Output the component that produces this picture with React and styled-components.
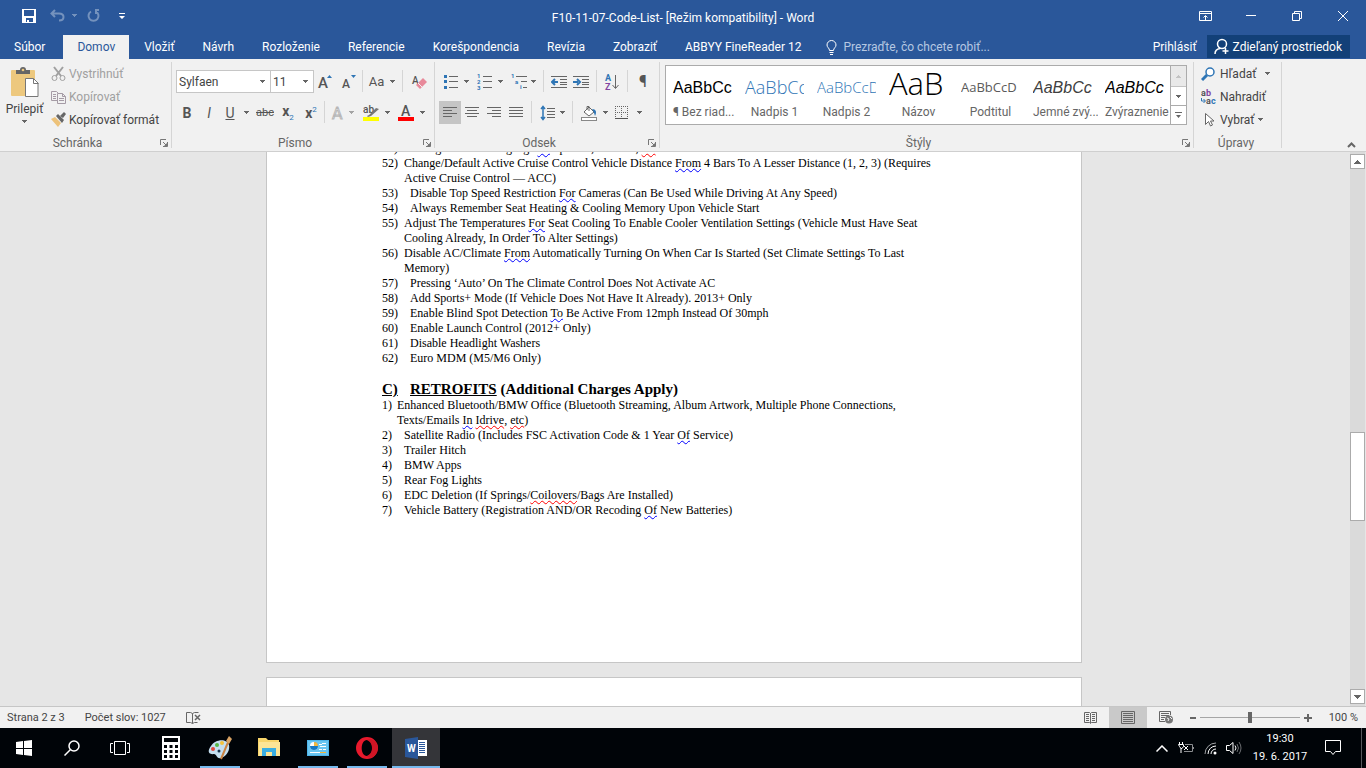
import React from "react";
import styled, { createGlobalStyle, css } from "styled-components";

const GlobalStyle = createGlobalStyle`
  * {
    box-sizing: border-box;
  }
  body {
    margin: 0;
    background: #e6e6e6;
    font-family: Roboto, "Open Sans", sans-serif;
    font-size: 12px;
    line-height: 16px;
    color: #444444;
  }
  button, select, input {
    font: inherit;
    color: inherit;
    border: none;
    padding: 0;
    margin: 0;
    background: transparent;
  }
  svg {
    display: block;
    flex: none;
  }
`;

const Window = styled.div`
  display: flex;
  flex-direction: column;
  height: 100vh;
  overflow: hidden;
`;

/* title bar */

const TitleBar = styled.header`
  display: grid;
  grid-template-columns: 1fr auto 1fr;
  align-items: center;
  height: 35px;
  background: #2a579a;
  color: white;
`;

const QuickAccess = styled.div`
  display: flex;
  align-items: center;
  padding: 0 0 4px 15px;
`;

const WindowButtons = styled.div`
  display: flex;
  justify-content: flex-end;
  padding-bottom: 4px;
`;

const BarButton = styled.button`
  display: flex;
  align-items: center;
  justify-content: center;
  width: ${(p) => p.$width || 46}px;
  height: 28px;
  opacity: ${(p) => (p.disabled ? 0.35 : 1)};
`;

const Title = styled.h1`
  margin: 0;
  font-size: 12px;
  font-weight: normal;
`;

/* tabs */

const TabRow = styled.nav`
  display: flex;
  height: 24px;
  background: #2a579a;
  color: white;
`;

const Tab = styled.button`
  padding: 0 14px;
  margin-right: ${(p) => (p.$file ? 4 : p.$active ? 1 : 0)}px;
  white-space: nowrap;
  ${(p) =>
    p.$active &&
    css`
      background: #f1f1f1;
      color: #2a579a;
    `}
`;

const TellMe = styled.label`
  display: flex;
  align-items: center;
  gap: 6px;
  flex: 1;
  padding-left: 11px;
  input {
    width: 200px;
    &::placeholder {
      color: #b6c8e2;
      opacity: 1;
    }
  }
`;

const ShareButton = styled.button`
  display: flex;
  align-items: center;
  gap: 4px;
  height: 23px;
  padding: 0 8px 0 7px;
  margin: 0 16px 0 10px;
  background: #124078;
  white-space: nowrap;
`;

/* ribbon */

const Ribbon = styled.section`
  display: flex;
  height: 93px;
  padding: 3px 0;
  background: #f1f1f1;
  border-bottom: 1px solid #cfcfcf;
`;

const Group = styled.div`
  display: flex;
  flex-direction: column;
  justify-content: space-between;
  flex: 0 0 ${(p) => p.$width}px;
  border-right: 1px solid #d5d5d5;
`;

const GroupFooter = styled.div`
  display: flex;
  align-items: center;
  gap: 5px;
  height: 10px;
  padding-right: 3px;
  color: #666666;
  span {
    flex: 1;
    text-align: center;
  }
`;

const CollapseCorner = styled.div`
  flex: 1;
  display: flex;
  align-items: flex-end;
  justify-content: flex-end;
  padding-right: 10px;
`;

const ClipboardBody = styled.div`
  display: flex;
`;

const PasteButton = styled.button`
  display: flex;
  flex-direction: column;
  align-items: center;
  width: 49px;
  padding-top: 5px;
  gap: 3px;
`;

const CommandList = styled.div`
  display: flex;
  flex-direction: column;
  padding-left: ${(p) => p.$indent || 0}px;
`;

const Command = styled.button`
  display: flex;
  align-items: center;
  gap: 3px;
  height: 23px;
  white-space: nowrap;
  color: ${(p) => (p.disabled ? "#a0a0a0" : "#444444")};
`;

const ToolRows = styled.div`
  display: flex;
  flex-direction: column;
  gap: 8px;
  padding: 8px 0 0 4px;
`;

const ToolRow = styled.div`
  display: flex;
  height: 23px;
`;

const Tool = styled.button`
  display: flex;
  align-items: center;
  justify-content: center;
  gap: ${(p) => p.$gap || 0}px;
  width: ${(p) => p.$width || 22}px;
  font-size: ${(p) => p.$size || 14}px;
  opacity: ${(p) => (p.disabled ? 0.55 : 1)};
  background: ${(p) => (p.$active ? "#c5c5c5" : "transparent")};
  color: #555555;
  sub, sup {
    font-size: 8px;
    line-height: 8px;
    color: #2e75b5;
  }
`;

const Divider = styled.span`
  width: 1px;
  height: 22px;
  margin: 0 ${(p) => p.$gap || 4}px;
  background: #d5d5d5;
`;

const Combo = styled.span`
  position: relative;
  width: ${(p) => p.$width}px;
  height: 23px;
  margin-right: -1px;
  background: white;
  border: 1px solid #c6c6c6;
  select {
    appearance: none;
    width: 100%;
    height: 21px;
    padding-left: 2px;
  }
  svg {
    position: absolute;
    right: 5px;
    top: 9px;
    pointer-events: none;
  }
`;

const Gallery = styled.div`
  display: flex;
  height: 60px;
  margin: 3px 6px 0 5px;
  background: white;
  border: 1px solid #ababab;
`;

const StyleItem = styled.button`
  display: flex;
  flex-direction: column;
  flex: 0 0 72px;
  padding: 7px 6px 0 7px;
  color: #666666;
  overflow: hidden;
`;

const Sample = styled.span`
  width: 100%;
  height: 31px;
  overflow: hidden;
  white-space: nowrap;
  text-align: left;
  line-height: ${(p) => p.$line || 29}px;
  font-family: ${(p) => p.$font || '"Open Sans"'}, sans-serif;
  font-size: ${(p) => p.$size || 16}px;
  font-weight: ${(p) => p.$weight || 400};
  font-style: ${(p) => (p.$italic ? "italic" : "normal")};
  color: ${(p) => p.$color || "black"};
`;

const StyleName = styled.span`
  width: 100%;
  text-align: center;
  white-space: nowrap;
`;

const GalleryScroll = styled.div`
  display: grid;
  flex: 1;
  grid-template-rows: 21px 19px 1fr;
  border-left: 1px solid #ababab;
  button {
    display: flex;
    flex-direction: column;
    align-items: center;
    justify-content: center;
    border-bottom: 1px solid #ababab;
  }
  button:first-child {
    background: #e1e1e1;
    opacity: 0.7;
  }
  button:last-child {
    border-bottom: none;
  }
`;

/* document */

const Workspace = styled.main`
  display: flex;
  flex: 1;
  min-height: 0;
`;

const Canvas = styled.div`
  display: flex;
  flex-direction: column;
  align-items: center;
  flex: 1;
  padding-right: 2px;
  overflow: hidden;
`;

const Page = styled.article`
  flex: ${(p) => (p.$next ? "1 0 0" : "none")};
  width: 816px;
  margin-top: ${(p) => (p.$next ? 14 : 0)}px;
  padding: 0 110px ${(p) => (p.$next ? 0 : 144)}px 115px;
  background: white;
  border: 1px solid #c6c6c6;
  border-top-width: ${(p) => (p.$next ? 1 : 0)}px;
  border-bottom-width: ${(p) => (p.$next ? 0 : 1)}px;
  font-family: "Liberation Serif", serif;
  font-size: 12px;
  line-height: 15px;
  color: black;
`;

const List = styled.ol`
  list-style: none;
  margin: ${(p) => (p.$continued ? -11 : 0)}px 0 0;
  padding: 0;
`;

const Item = styled.li`
  display: flex;
  white-space: nowrap;
`;

const Marker = styled.span`
  flex: 0 0 ${(p) => p.$width}px;
`;

const Heading = styled.h2`
  display: flex;
  margin: 15px 0 0;
  font-size: 15px;
  line-height: 17px;
`;

const Flag = styled.span`
  text-decoration: underline wavy ${(p) => (p.$spelling ? "#ff0000" : "#0000ff")} 1px;
  text-underline-offset: 1px;
  text-decoration-skip-ink: none;
`;

const Scrollbar = styled.div`
  display: flex;
  flex-direction: column;
  justify-content: space-between;
  width: 15px;
  margin-right: 1px;
  padding: 2px 0;
  background: #dadada;
`;

const ScrollButton = styled.button`
  display: flex;
  align-items: center;
  justify-content: center;
  height: 15px;
  background: white;
  border: 1px solid #ababab;
`;

const Track = styled.div`
  flex: 1;
  padding-top: 263px;
`;

const Thumb = styled.div`
  height: 89px;
  background: white;
  border: 1px solid #ababab;
`;

/* status bar */

const StatusBar = styled.footer`
  display: flex;
  align-items: center;
  height: 22px;
  padding: 0 8px 0 7px;
  font-size: 11px;
  background: #f1f1f1;
  border-top: 1px solid #c6c6c6;
`;

const StatusText = styled.span`
  margin-right: 20px;
`;

const ViewButton = styled.button`
  display: flex;
  align-items: center;
  justify-content: center;
  width: 38px;
  height: 21px;
  background: ${(p) => (p.$active ? "#c9c9c9" : "transparent")};
`;

const ZoomSlider = styled.input`
  appearance: none;
  width: 100px;
  height: 12px;
  margin: 0 3px;
  background: linear-gradient(#a6a6a6, #a6a6a6) center / 100% 1px no-repeat;
  &::-webkit-slider-thumb {
    appearance: none;
    width: 4px;
    height: 11px;
    background: #666666;
  }
`;

const ZoomValue = styled.span`
  width: 46px;
  text-align: right;
`;

/* taskbar */

const Taskbar = styled.footer`
  display: flex;
  height: 40px;
  background: #000408;
  color: white;
`;

const Apps = styled.div`
  display: flex;
  gap: 1px;
  margin-left: 3px;
`;

const TaskButton = styled.button`
  position: relative;
  display: flex;
  align-items: center;
  justify-content: center;
  width: 48px;
  height: 40px;
  background: ${(p) => (p.$active ? "#343539" : "transparent")};
  &::after {
    content: "";
    display: ${(p) => (p.$running ? "block" : "none")};
    position: absolute;
    left: ${(p) => (p.$active ? 0 : 4)}px;
    right: ${(p) => (p.$active ? 0 : 4)}px;
    bottom: 0;
    height: 2px;
    background: #76b9ed;
  }
`;

const Tray = styled.div`
  display: flex;
  align-items: center;
  flex: 1;
  justify-content: flex-end;
`;

const TrayButton = styled.button`
  display: flex;
  align-items: center;
  justify-content: center;
  width: 24px;
  height: 40px;
`;

const Clock = styled.time`
  width: 64px;
  margin: 0 9px 0 2px;
  text-align: center;
  font-size: 11px;
  line-height: 18px;
`;

const ShowDesktop = styled.button`
  width: 5px;
  height: 40px;
  margin-left: 16px;
  border-left: 1px solid #55585c;
`;

/* small drawings */

const Caret = ({ up, large, color = "#666666" }) => {
  const size = large ? 7 : 5;
  const rows = (size + 1) / 2;
  const d = Array.from({ length: rows }, (_, i) => {
    const y = up ? rows - 1 - i : i;
    return `M${i} ${y}h${size - 2 * i}v1H${i}z`;
  }).join("");
  return (
    <svg width={size} height={rows} viewBox={`0 0 ${size} ${rows}`} shapeRendering="crispEdges">
      <path d={d} fill={color} />
    </svg>
  );
};

const Svg = ({ w = 16, h = 16, children, ...rest }) => (
  <svg width={w} height={h} viewBox={`0 0 ${w} ${h}`} fill="none" stroke="#666666" {...rest}>
    {children}
  </svg>
);

const Launcher = () => (
  <Svg w={8} h={8} stroke="#777777">
    <path d="M.5 6V.5H6M3 3l3 3M7.500 3v4.500H3" />
    <path d="M7 4v3H4z" fill="#777777" stroke="none" />
  </Svg>
);

const PasteIcon = () => (
  <Svg w={28} h={31} stroke="none">
    <rect y="3" width="24" height="26" rx="1" fill="#edc87e" />
    <path d="M5 7V3h4a3 3 0 0 1 6 0h4v4z" fill="#666666" />
    <circle cx="12" cy="3" r="1.3" fill="#edc87e" />
    <path d="M14.500 11.500h8l4.500 4.500v13.500h-12.500z" fill="white" stroke="#777777" />
    <path d="M22.500 11.500v5h5" stroke="#777777" />
  </Svg>
);

const CutIcon = () => (
  <Svg w={15} stroke="#a0a0a0">
    <path d="M3 1l7 9M12 1L5 10" strokeWidth="2" />
    <circle cx="3.500" cy="12" r="2.500" />
    <circle cx="11.500" cy="12" r="2.500" />
  </Svg>
);

const CopyIcon = () => (
  <Svg w={15} stroke="#a59ba5">
    <path d="M.5 2.500h5l2 2v7h-7zM2 5.500h3M2 7.500h3M2 9.500h3" />
    <path d="M6.500 4.500h5l3 3v7h-8z" fill="#f1f1f1" />
    <path d="M11.500 4.500v3h3M8 9.500h5M8 11.500h5" />
  </Svg>
);

const BrushIcon = () => (
  <Svg w={15} stroke="none">
    <path d="M0 7l4-2 6 6-3 4z" fill="#edc27a" />
    <path d="M5 4l2-2 6 6-2 3z" fill="#666666" />
    <path d="M9 4l4-4 2 2-3 4z" fill="#666666" />
  </Svg>
);

const FontSizeIcon = ({ up }) => (
  <Svg w={18} h={20} stroke="none">
    <text x="1" y="16" fontSize={up ? 15 : 12} fontWeight="500" fill="#555555">A</text>
    <path d={up ? "M10 6h5l-2.500-3z" : "M10 3h5l-2.500 3z"} fill="#2e75b5" />
  </Svg>
);

const ClearIcon = () => (
  <Svg stroke="none">
    <text x="1" y="10" fontSize="10" fontWeight="500" fill="#555555">A</text>
    <path d="M5 11l7-7 4 4-7 7z" fill="#e8899a" />
    <path d="M7 9l4 4" stroke="#f1f1f1" />
  </Svg>
);

const EffectIcon = () => (
  <Svg w={14} h={20}>
    <text x="1" y="16" fontSize="16" fill="white" stroke="#888888">A</text>
  </Svg>
);

const HighlightIcon = () => (
  <Svg h={18} stroke="none">
    <text x="0" y="9" fontSize="10" fontWeight="500" fill="#555555">ab</text>
    <path d="M4 12l2-1 7-7 3 1-8 7-3 1z" fill="#777777" />
    <rect y="13" width="16" height="4" fill="#ffff00" />
  </Svg>
);

const FontColorIcon = () => (
  <Svg h={18} stroke="none">
    <text x="3" y="12" fontSize="14" fontWeight="500" fill="#555555">A</text>
    <rect y="13" width="16" height="4" fill="#ff0000" />
  </Svg>
);

const ListIcon = ({ kind }) => (
  <Svg h={18}>
    {kind === "bullets" && <path d="M1 2h3v3H1zM1 7h3v3H1zM1 13h3v3H1z" fill="#2e75b5" stroke="none" />}
    {kind === "numbers" && (
      <g fill="#2e75b5" stroke="none" fontSize="6" fontWeight="bold">
        <text x="0" y="5">1</text>
        <text x="0" y="11">2</text>
        <text x="0" y="17">3</text>
      </g>
    )}
    {kind === "levels" ? (
      <g>
        <g fill="#2e75b5" stroke="none" fontSize="6" fontWeight="bold">
          <text x="0" y="5">1</text>
          <text x="4" y="11">a</text>
          <text x="9" y="16">i</text>
        </g>
        <path d="M5 3.500h11M10 8.500h6M12 14.500h4" />
      </g>
    ) : (
      <path d="M6 3.500h9M6 8.500h9M6 14.500h9" />
    )}
  </Svg>
);

const IndentIcon = ({ right }) => (
  <Svg>
    <path d="M0 2.500h16M9 5.500h7M9 8.500h7M9 10.500h7M0 13.500h16" />
    <path d={right ? "M0 8h5M4 5l3 3-3 3" : "M7 8H2M4 5L1 8l3 3"} stroke="#2e75b5" strokeWidth="2" />
  </Svg>
);

const SortIcon = () => (
  <Svg h={20}>
    <g stroke="none" fontSize="9" fontWeight="bold">
      <text x="1" y="9" fill="#2e75b5">A</text>
      <text x="1" y="18" fill="#8044a0">Z</text>
    </g>
    <path d="M11.500 3v13M8.500 13l3 3.500 3-3.500" />
  </Svg>
);

const AlignIcon = ({ lines }) => (
  <Svg w={14} h={13}>
    <path d={lines.map(([x, w], i) => `M${x} ${i * 3 + 1.5}h${w}`).join("")} />
  </Svg>
);

const SpacingIcon = () => (
  <Svg>
    <path d="M7 3.500h8M7 6.500h8M7 9.500h8M7 12.500h8" />
    <path d="M3 2v12M1 4l2-2.500L5 4M1 12l2 2.500L5 12" stroke="#2e75b5" strokeWidth="1.500" />
  </Svg>
);

const ShadingIcon = () => (
  <Svg>
    <path d="M3 7l5-5 5 5-5 4z" fill="white" />
    <path d="M6 5V1.500h2V6" />
    <path d="M11 4c4 0 5 3 3 7-1-3-1-4-3-7z" fill="#2e75b5" stroke="none" />
    <rect x=".5" y="12.500" width="15" height="3" fill="white" stroke="#888888" />
  </Svg>
);

const BordersIcon = () => (
  <Svg w={14} h={14}>
    <path d="M.5 0v12M6.500 0v12M12.500 0v12M0 .5h13M0 6.500h13" strokeDasharray="1 1" />
    <path d="M0 12.500h13" stroke="#555555" />
  </Svg>
);

const FindIcon = () => (
  <Svg>
    <circle cx="9" cy="6" r="4" stroke="#2e75b5" strokeWidth="1.500" fill="white" />
    <path d="M6 9l-5 5" stroke="#2e75b5" strokeWidth="3" />
  </Svg>
);

const ReplaceIcon = () => (
  <Svg h={18} stroke="none">
    <g fontSize="9" fontWeight="bold">
      <text x="0" y="8" fill="#555555">a</text>
      <text x="5" y="8" fill="#8044a0">b</text>
      <text x="5" y="16" fill="#555555">a</text>
      <text x="10" y="16" fill="#2e75b5">c</text>
    </g>
    <path d="M.5 10v3H4M2.500 11l2 2-2 2" fill="none" stroke="#2e75b5" />
  </Svg>
);

const SelectIcon = () => (
  <Svg>
    <path d="M4.500 1.500v11l3-3 2 4.500 2-1-2-4h3.500z" fill="white" />
  </Svg>
);

const Bulb = () => (
  <Svg w={11} h={15} stroke="white">
    <path d="M3.500 10.500C3.500 8 1 7.500 1 5a4.500 4.500 0 0 1 9 0c0 2.500-2.500 3-2.500 5.500zM3.500 12.500h4M4 14.500h3" />
  </Svg>
);

const ShareIcon = () => (
  <Svg w={15} h={17} stroke="white">
    <circle cx="8" cy="6" r="4.500" strokeWidth="1.500" />
    <path d="M1 16c0-3 2-5 5-5.500M11.500 10v6M8.500 13h6" strokeWidth="1.500" />
  </Svg>
);

const styleItems = [
  { name: "¶ Bez riad...", text: "AaBbCc", font: '"Liberation Sans"' },
  { name: "Nadpis 1", text: "AaBbCc", size: 18, weight: 300, color: "#2e74b5" },
  { name: "Nadpis 2", text: "AaBbCcD", weight: 300, size: 15, color: "#2e74b5" },
  { name: "Názov", text: "AaB", size: 31, weight: 300, line: 21 },
  { name: "Podtitul", text: "AaBbCcD", size: 13, color: "#5a5a5a" },
  { name: "Jemné zvý...", text: "AaBbCc", font: '"Liberation Sans"', italic: true, color: "#404040" },
  { name: "Zvýraznenie", text: "AaBbCc", font: '"Liberation Sans"', italic: true },
];

const tabs = ["Vložiť", "Návrh", "Rozloženie", "Referencie", "Korešpondencia", "Revízia", "Zobraziť", "ABBYY FineReader 12"];

const codingItems = [
  { no: 51, text: <>Change Cluster Language <Flag>To</Flag> Spanish, Chinese, <Flag $spelling>etc</Flag></> },
  {
    no: 52,
    wraps: true,
    text: <>Change/Default Active Cruise Control Vehicle Distance <Flag>From</Flag> 4 Bars To A Lesser Distance (1, 2, 3) (Requires<br />Active Cruise Control — ACC)</>,
  },
  { no: 53, text: <>Disable Top Speed Restriction <Flag>For</Flag> Cameras (Can Be Used While Driving At Any Speed)</> },
  { no: 54, text: "Always Remember Seat Heating & Cooling Memory Upon Vehicle Start" },
  {
    no: 55,
    wraps: true,
    text: <>Adjust The Temperatures <Flag>For</Flag> Seat Cooling To Enable Cooler Ventilation Settings (Vehicle Must Have Seat<br />Cooling Already, In Order To Alter Settings)</>,
  },
  {
    no: 56,
    wraps: true,
    text: <>Disable AC/Climate <Flag>From</Flag> Automatically Turning On When Car Is Started (Set Climate Settings To Last<br />Memory)</>,
  },
  { no: 57, text: "Pressing ‘Auto’ On The Climate Control Does Not Activate AC" },
  { no: 58, text: "Add Sports+ Mode (If Vehicle Does Not Have It Already). 2013+ Only" },
  { no: 59, text: <>Enable Blind Spot Detection <Flag>To</Flag> Be Active From 12mph Instead Of 30mph</> },
  { no: 60, text: "Enable Launch Control (2012+ Only)" },
  { no: 61, text: "Disable Headlight Washers" },
  { no: 62, text: "Euro MDM (M5/M6 Only)" },
];

const retrofitItems = [
  {
    no: 1,
    wraps: true,
    text: <>Enhanced Bluetooth/BMW Office (Bluetooth Streaming, Album Artwork, Multiple Phone Connections,<br />Texts/Emails <Flag>In</Flag> <Flag $spelling>Idrive</Flag>, <Flag $spelling>etc</Flag>)</>,
  },
  { no: 2, text: <>Satellite Radio (Includes FSC Activation Code & 1 Year <Flag>Of</Flag> Service)</> },
  { no: 3, text: "Trailer Hitch" },
  { no: 4, text: "BMW Apps" },
  { no: 5, text: "Rear Fog Lights" },
  { no: 6, text: <>EDC Deletion (If Springs/<Flag $spelling>Coilovers</Flag>/Bags Are Installed)</> },
  { no: 7, text: <>Vehicle Battery (Registration AND/OR Recoding <Flag>Of</Flag> New Batteries)</> },
];

const RibbonGroup = ({ label, width, launcher = true, children }) => (
  <Group $width={width}>
    {children}
    <GroupFooter>
      <span>{label}</span>
      {launcher && <Launcher />}
    </GroupFooter>
  </Group>
);

const App = () => {
  return (
    <Window>
      <GlobalStyle />
      <TitleBar>
        <QuickAccess>
          <BarButton $width={28} aria-label="Uložiť">
            <Svg w={14} h={14} stroke="none">
              <path d="M0 0h14v14H0z" fill="white" />
              <path d="M2 1h10v6H2zM4 9h7v4H7v-2H5v2H4z" fill="#2a579a" />
            </Svg>
          </BarButton>
          <BarButton $width={28} disabled aria-label="Späť">
            <Svg w={15} h={13} stroke="white" strokeWidth="2">
              <path d="M5 1L1.500 4.500 5 8M2 4.500h7c6 0 6 7 0 7" />
            </Svg>
          </BarButton>
          <BarButton $width={6} disabled aria-label="Zoznam krokov späť">
            <Caret color="white" />
          </BarButton>
          <BarButton $width={32} disabled aria-label="Opakovať">
            <Svg w={13} h={13} stroke="white" strokeWidth="2">
              <path d="M4 2.500a5 5 0 1 0 5 0M8 1h4M9 1v4" />
            </Svg>
          </BarButton>
          <BarButton $width={26} aria-label="Prispôsobiť">
            <Svg w={6} h={6} stroke="none">
              <path d="M0 0h6v1H0zM0 3h6L3 6z" fill="white" />
            </Svg>
          </BarButton>
        </QuickAccess>
        <Title>F10-11-07-Code-List- [Režim kompatibility] - Word</Title>
        <WindowButtons>
          <BarButton aria-label="Možnosti pása s nástrojmi">
            <Svg w={13} h={10} stroke="white">
              <path d="M.5.5h12v9H.5zM0 2.500h13M6.500 9V5M4.500 6.500l2-2 2 2" />
            </Svg>
          </BarButton>
          <BarButton aria-label="Minimalizovať">
            <Svg w={10} h={2} stroke="white"><path d="M0 .5h10" /></Svg>
          </BarButton>
          <BarButton aria-label="Obnoviť">
            <Svg w={10} h={10} stroke="white"><path d="M.5 2.500h7v7h-7zM2.500 2V.5h7v7H8" /></Svg>
          </BarButton>
          <BarButton aria-label="Zavrieť">
            <Svg w={10} h={10} stroke="white"><path d="M0 0l10 10M10 0L0 10" /></Svg>
          </BarButton>
        </WindowButtons>
      </TitleBar>

      <TabRow>
        <Tab $file>Súbor</Tab>
        <Tab $active>Domov</Tab>
        {tabs.map((tab) => (
          <Tab key={tab}>{tab}</Tab>
        ))}
        <TellMe>
          <Bulb />
          <input type="text" placeholder="Prezraďte, čo chcete robiť..." aria-label="Prezraďte, čo chcete robiť" />
        </TellMe>
        <button>Prihlásiť</button>
        <ShareButton>
          <ShareIcon />
          Zdieľaný prostriedok
        </ShareButton>
      </TabRow>

      <Ribbon>
        <RibbonGroup label="Schránka" width={172}>
          <ClipboardBody>
            <PasteButton>
              <PasteIcon />
              Prilepiť
              <Caret />
            </PasteButton>
            <CommandList $indent={2}>
              <Command disabled><CutIcon />Vystrihnúť</Command>
              <Command disabled><CopyIcon />Kopírovať</Command>
              <Command><BrushIcon />Kopírovať formát</Command>
            </CommandList>
          </ClipboardBody>
        </RibbonGroup>

        <RibbonGroup label="Písmo" width={263}>
          <ToolRows>
            <ToolRow>
              <Combo $width={95}>
                <select aria-label="Písmo" defaultValue="Sylfaen"><option>Sylfaen</option></select>
                <Caret />
              </Combo>
              <Combo $width={44}>
                <select aria-label="Veľkosť písma" defaultValue="11"><option>11</option></select>
                <Caret />
              </Combo>
              <Tool $width={26} aria-label="Zväčšiť písmo"><FontSizeIcon up /></Tool>
              <Tool aria-label="Zmenšiť písmo"><FontSizeIcon /></Tool>
              <Divider $gap={1} />
              <Tool $width={36} $gap={6} $size={13} aria-label="Zmeniť veľkosť písmen">Aa<Caret /></Tool>
              <Divider $gap={2} />
              <Tool $width={28} aria-label="Vymazať formátovanie"><ClearIcon /></Tool>
            </ToolRow>
            <ToolRow>
              <Tool aria-label="Tučné"><b>B</b></Tool>
              <Tool aria-label="Kurzíva"><i>I</i></Tool>
              <Tool $width={34} $gap={9} aria-label="Podčiarknuté"><u>U</u><Caret /></Tool>
              <Tool $size={11} aria-label="Prečiarknuté"><s>abc</s></Tool>
              <Tool $width={24} aria-label="Dolný index"><span><b>x</b><sub>2</sub></span></Tool>
              <Tool aria-label="Horný index"><span><b>x</b><sup>2</sup></span></Tool>
              <Divider $gap={2} />
              <Tool disabled $width={30} $gap={4} aria-label="Textové efekty"><EffectIcon /><Caret /></Tool>
              <Tool $width={38} $gap={6} aria-label="Farba zvýraznenia"><HighlightIcon /><Caret /></Tool>
              <Tool $width={32} $gap={6} aria-label="Farba písma"><FontColorIcon /><Caret /></Tool>
            </ToolRow>
          </ToolRows>
        </RibbonGroup>

        <RibbonGroup label="Odsek" width={225}>
          <ToolRows>
            <ToolRow>
              <Tool $width={34} $gap={5} aria-label="Odrážky"><ListIcon kind="bullets" /><Caret /></Tool>
              <Tool $width={34} $gap={5} aria-label="Číslovanie"><ListIcon kind="numbers" /><Caret /></Tool>
              <Tool $width={32} $gap={4} aria-label="Viacúrovňový zoznam"><ListIcon kind="levels" /><Caret /></Tool>
              <Divider $gap={4} />
              <Tool aria-label="Zmenšiť zarážku"><IndentIcon /></Tool>
              <Tool aria-label="Zväčšiť zarážku"><IndentIcon right /></Tool>
              <Divider $gap={4} />
              <Tool aria-label="Zoradiť"><SortIcon /></Tool>
              <Divider $gap={4} />
              <Tool $size={16} aria-label="Zobraziť všetko">¶</Tool>
            </ToolRow>
            <ToolRow>
              <Tool $active aria-label="Zarovnať vľavo"><AlignIcon lines={[[0, 14], [0, 9], [0, 14], [0, 9]]} /></Tool>
              <Tool aria-label="Centrovať"><AlignIcon lines={[[0, 14], [2, 10], [0, 14], [2, 10]]} /></Tool>
              <Tool aria-label="Zarovnať vpravo"><AlignIcon lines={[[0, 14], [5, 9], [0, 14], [5, 9]]} /></Tool>
              <Tool aria-label="Zarovnať podľa okrajov"><AlignIcon lines={[[0, 14], [0, 14], [0, 14], [0, 14]]} /></Tool>
              <Divider $gap={4} />
              <Tool $width={32} $gap={4} aria-label="Riadkovanie"><SpacingIcon /><Caret /></Tool>
              <Divider $gap={4} />
              <Tool $width={34} $gap={6} aria-label="Podfarbenie"><ShadingIcon /><Caret /></Tool>
              <Tool $width={34} $gap={8} aria-label="Orámovanie"><BordersIcon /><Caret /></Tool>
            </ToolRow>
          </ToolRows>
        </RibbonGroup>

        <RibbonGroup label="Štýly" width={534}>
          <Gallery>
            {styleItems.map((item) => (
              <StyleItem key={item.name}>
                <Sample
                  $font={item.font}
                  $size={item.size}
                  $weight={item.weight}
                  $italic={item.italic}
                  $color={item.color}
                  $line={item.line}
                >
                  {item.text}
                </Sample>
                <StyleName>{item.name}</StyleName>
              </StyleItem>
            ))}
            <GalleryScroll>
              <button aria-label="Predchádzajúce štýly"><Caret up color="#ababab" /></button>
              <button aria-label="Ďalšie štýly"><Caret /></button>
              <button aria-label="Všetky štýly">
                <Svg w={7} h={6} stroke="none">
                  <path d="M0 0h7v1H0zM1 3h5L3.500 6z" fill="#666666" />
                </Svg>
              </button>
            </GalleryScroll>
          </Gallery>
        </RibbonGroup>

        <RibbonGroup label="Úpravy" width={88} launcher={false}>
          <CommandList $indent={7}>
            <Command><FindIcon />Hľadať<span /><span /><Caret /></Command>
            <Command><ReplaceIcon />Nahradiť</Command>
            <Command><SelectIcon />Vybrať<Caret /></Command>
          </CommandList>
        </RibbonGroup>

        <CollapseCorner>
          <button aria-label="Zbaliť pás s nástrojmi">
            <Svg w={9} h={6} strokeWidth="2"><path d="M1 5l3.500-3.500L8 5" /></Svg>
          </button>
        </CollapseCorner>
      </Ribbon>

      <Workspace>
        <Canvas>
          <Page>
            <List $continued>
              {codingItems.map((item) => (
                <Item key={item.no}>
                  <Marker $width={item.wraps ? 22 : 28}>{item.no})</Marker>
                  <span>{item.text}</span>
                </Item>
              ))}
            </List>
            <Heading>
              <Marker $width={28}><u>C)</u></Marker>
              <span><u>RETROFITS</u> (Additional Charges Apply)</span>
            </Heading>
            <List>
              {retrofitItems.map((item) => (
                <Item key={item.no}>
                  <Marker $width={item.wraps ? 15 : 22}>{item.no})</Marker>
                  <span>{item.text}</span>
                </Item>
              ))}
            </List>
          </Page>
          <Page $next />
        </Canvas>
        <Scrollbar>
          <ScrollButton aria-label="Nahor"><Caret up large /></ScrollButton>
          <Track><Thumb /></Track>
          <ScrollButton aria-label="Nadol"><Caret large /></ScrollButton>
        </Scrollbar>
      </Workspace>

      <StatusBar>
        <StatusText>Strana 2 z 3</StatusText>
        <StatusText>Počet slov: 1027</StatusText>
        <Svg w={15} h={13}>
          <path d="M.5 1.500h4l2 1v10l-2-1h-4zM6.500 2.500l2-1h4M6.500 12.500l2-1h3" />
          <path d="M9 4l5 5M14 4L9 9" strokeWidth="1.500" />
        </Svg>
        <CollapseCorner />
        <ViewButton aria-label="Režim čítania">
          <Svg w={13} h={12}>
            <path d="M.5.5h5l1 1 1-1h5v10h-5l-1 1-1-1h-5zM6.500 1v10M2 2.500h3M2 4.500h3M2 6.500h3M2 8.500h3M8 2.500h3M8 4.500h3M8 6.500h3M8 8.500h3" />
          </Svg>
        </ViewButton>
        <ViewButton $active aria-label="Rozloženie pri tlači">
          <Svg w={14} h={13}>
            <path d="M.5.5h13v12H.5zM2 2.500h10M2 4.500h10M2 6.500h10M2 8.500h10M2 10.500h10" />
          </Svg>
        </ViewButton>
        <ViewButton aria-label="Webové rozloženie">
          <Svg w={14} h={13}>
            <path d="M11.500 4V.5H.5v10H6M2 2.500h8M2 4.500h8M2 6.500h4M2 8.500h3" />
            <circle cx="10" cy="8.500" r="4" fill="#777777" stroke="none" />
            <path d="M8 7l2 1-1 2M11 6l2 2" stroke="#f1f1f1" />
          </Svg>
        </ViewButton>
        <button aria-label="Oddialiť"><Svg w={12} h={8}><path d="M5 4h6" strokeWidth="2" /></Svg></button>
        <ZoomSlider type="range" aria-label="Lupa" min="0" max="100" defaultValue="50" />
        <button aria-label="Priblížiť"><Svg w={9} h={8}><path d="M1 4h8M5 0v8" strokeWidth="2" /></Svg></button>
        <ZoomValue>100 %</ZoomValue>
      </StatusBar>

      <Taskbar>
        <TaskButton aria-label="Štart">
          <Svg w={16} h={16} stroke="none">
            <path d="M0 2l7-1v7H0zM8 1l8-1v8H8zM0 9h7v6l-7-1zM8 9h8v7l-8-1z" fill="white" />
          </Svg>
        </TaskButton>
        <TaskButton aria-label="Hľadať">
          <Svg stroke="white" strokeWidth="1.500">
            <circle cx="10" cy="6" r="5" />
            <path d="M6.500 9.500L.5 15.500" />
          </Svg>
        </TaskButton>
        <TaskButton aria-label="Zobrazenie úloh">
          <Svg w={20} h={14} stroke="white">
            <path d="M4.500.5h11v13h-11zM3 2.500H.5v9H3M17 2.500h2.500v9H17" />
          </Svg>
        </TaskButton>
        <Apps>
          <TaskButton aria-label="Kalkulačka">
            <Svg w={18} h={24} stroke="none">
              <path d="M0 0h18v24H0z" fill="white" />
              <path d="M2 2h14v4H2z" fill="#000408" />
              <path d="M3.500 9v14M9 9v14M14.500 9v14" stroke="#000408" strokeWidth="3" strokeDasharray="3 2" />
            </Svg>
          </TaskButton>
          <TaskButton $running aria-label="Skicár">
            <Svg w={24} h={24} stroke="none">
              <path d="M3 10c4-7 16-8 18-1 1 5-2 11-8 13-5 1-4-4-7-4-7 1-6-4-3-8z" fill="#c5dff0" />
              <circle cx="5" cy="13" r="2" fill="#e2483d" />
              <circle cx="9" cy="9" r="2" fill="#58b947" />
              <circle cx="14" cy="7" r="2" fill="#f4c33d" />
              <circle cx="11" cy="15" r="1.500" fill="#16324c" />
              <path d="M21 4l-8 19" stroke="#c98343" strokeWidth="2" />
              <path d="M18 5l3-5 3 3-3 5z" fill="#d9a465" />
            </Svg>
          </TaskButton>
          <TaskButton aria-label="Prieskumník">
            <Svg w={22} h={20} stroke="none">
              <path d="M0 2V0h8l2 2h11v16H0z" fill="#f8d56b" />
              <path d="M1 4h21v14H1z" fill="#fde596" />
              <path d="M4 18v-8h14v8h-4v-4H8v4z" fill="#3aaee2" />
            </Svg>
          </TaskButton>
          <TaskButton $running aria-label="Ovládací panel">
            <Svg w={22} h={16} stroke="none">
              <path d="M0 0h22v16H0z" fill="#4db5ea" />
              <path d="M1 1h20v14H1z" fill="#6ac6f2" />
              <circle cx="7" cy="6" r="4" fill="white" />
              <path d="M7 6V2a4 4 0 1 1-4 4z" fill="#1679c4" />
              <path d="M7 6h4a4 4 0 0 0-4-4z" fill="#f5b83d" />
              <path d="M12 4.500h3M15 3.500h4M13 6.500h6M12 9.500h3M16 9.500h3M3 12.500h11" stroke="white" />
              <path d="M13 12h6v1h-6z" fill="#f5b83d" />
            </Svg>
          </TaskButton>
          <TaskButton $running aria-label="Opera">
            <Svg w={24} h={24} stroke="none">
              <path fillRule="evenodd" d="M12 1a11 11 0 1 0 0 22 11 11 0 0 0 0-22zm0 3c7 0 7 16 0 16S5 4 12 4z" fill="#e8192c" />
              <path d="M12 20c2-1 5-3 5-8s-3-7-5-8c3-2 8 0 10 4 2 5 0 10-4 13-2 1-5 1-6-1z" fill="#d01525" />
            </Svg>
          </TaskButton>
          <TaskButton $running $active aria-label="Word">
            <Svg w={22} h={22} stroke="none">
              <path d="M11 3h11v16H11z" fill="white" />
              <path d="M14 5.500h6M14 7.500h6M14 9.500h6M14 11.500h6M14 13.500h6M14 15.500h6" stroke="#2a579a" />
              <path d="M0 2l13-2v22L0 20z" fill="#2a579a" />
              <text x="2" y="15" fontSize="10" fontWeight="bold" fill="white">W</text>
            </Svg>
          </TaskButton>
        </Apps>
        <Tray>
          <TrayButton aria-label="Skryté ikony">
            <Svg w={12} h={7} stroke="white" strokeWidth="1.500"><path d="M.5 6.500L6 1l5.500 5.500" /></Svg>
          </TrayButton>
          <TrayButton aria-label="Batéria">
            <Svg w={16} h={12} stroke="white">
              <path d="M1.500 0v2M4.500 0v2M.5 2.500h5v2l-1.500 2h-1l-1.500-2zM3 6v5M6 4l4 4M10 4L6 8" />
              <path d="M7 2.500h7.500v7H6M15.500 5v2" stroke="#8b8d90" />
            </Svg>
          </TrayButton>
          <TrayButton aria-label="Sieť">
            <Svg w={13} h={13} stroke="white">
              <path d="M1 12A11 11 0 0 1 12 1" stroke="#a0a2a5" />
              <path d="M4 12a8 8 0 0 1 8-8M7 12a5 5 0 0 1 5-5" />
              <circle cx="11" cy="11" r="1.500" fill="white" stroke="none" />
            </Svg>
          </TrayButton>
          <TrayButton aria-label="Hlasitosť">
            <Svg w={16} h={14} stroke="white">
              <path d="M.5 4.500h3l3.500-3v11l-3.500-3h-3zM9 4.500q2 2.500 0 5" />
              <path d="M11 3q3 4 0 8M13 1q4 6 0 12" stroke="#6b6d70" />
            </Svg>
          </TrayButton>
          <Clock>19:30<br />19. 6. 2017</Clock>
          <TrayButton aria-label="Centrum akcií">
            <Svg w={16} h={16} stroke="white"><path d="M.5.5h15v11h-5l-2.500 3-2.500-3H.5z" /></Svg>
          </TrayButton>
          <ShowDesktop aria-label="Zobraziť plochu" />
        </Tray>
      </Taskbar>
    </Window>
  );
};

export default App;
